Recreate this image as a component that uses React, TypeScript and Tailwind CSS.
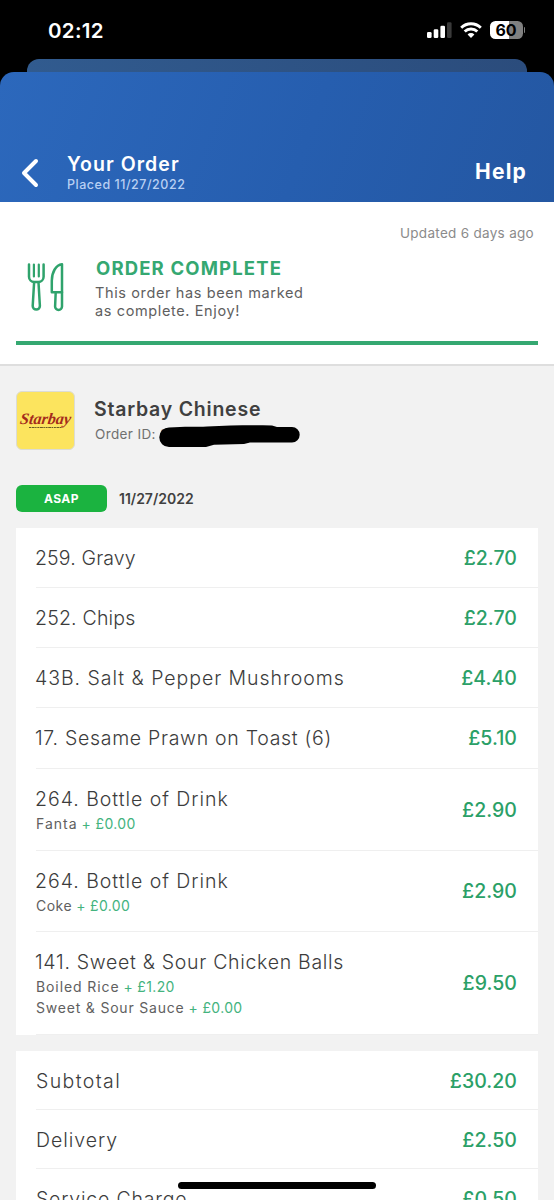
import React from 'react';

type Extra = { name: string; price: string; style: string };
type Item = { name: string; price: string; row: string; title: string; extras?: Extra[] };

const items: Item[] = [
    { name: '259. Gravy', price: '£2.70', row: 'h-[60px]', title: 'tracking-[0.15px]' },
    { name: '252. Chips', price: '£2.70', row: 'h-[60px]', title: 'tracking-[0.2px]' },
    { name: '43B. Salt & Pepper Mushrooms', price: '£4.40', row: 'h-[60px]', title: 'tracking-[0.96px]' },
    { name: '17. Sesame Prawn on Toast (6)', price: '£5.10', row: 'h-[61px]', title: 'tracking-[0.7px]' },
    {
        name: '264. Bottle of Drink',
        price: '£2.90',
        row: 'h-[82px]',
        title: 'tracking-[0.97px]',
        extras: [{ name: 'Fanta', price: '+ £0.00', style: 'tracking-[1px]' }],
    },
    {
        name: '264. Bottle of Drink',
        price: '£2.90',
        row: 'h-[81px]',
        title: 'tracking-[0.97px]',
        extras: [{ name: 'Coke', price: '+ £0.00', style: 'tracking-[0.5px]' }],
    },
    {
        name: '141. Sweet & Sour Chicken Balls',
        price: '£9.50',
        row: 'h-[103px]',
        title: 'tracking-[0.7px]',
        extras: [
            { name: 'Boiled Rice', price: '+ £1.20', style: 'tracking-[0.9px]' },
            { name: 'Sweet & Sour Sauce', price: '+ £0.00', style: 'tracking-[0.8px]' },
        ],
    },
];

const totals = [
    { name: 'Subtotal', price: '£30.20', title: 'tracking-[1.4px]' },
    { name: 'Delivery', price: '£2.50', title: 'tracking-[0.95px]' },
    { name: 'Service Charge', price: '£0.50', title: 'tracking-[0.8px]' },
];

const StatusBar = () => (
    <div className="flex h-[59px] items-start justify-between pl-12 pr-[29px] text-white">
        <div className="mt-[18px] text-[20.5px] font-semibold leading-[25px] tracking-[0.3px]">02:12</div>
        <div className="mt-[21px] flex items-start">
            <svg width="26" height="18" viewBox="0 0 26 18" fill="#fff">
                <rect x="0" y="11" width="4.6" height="6" rx="1.3" />
                <rect x="6.7" y="8.3" width="4.6" height="8.7" rx="1.3" />
                <rect x="13.4" y="4.8" width="4.6" height="12.2" rx="1.3" />
                <rect x="20" y="1.3" width="4.6" height="15.7" rx="1.3" fill="#3a3a3a" />
            </svg>
            <svg className="ml-[7px]" width="22" height="18" viewBox="0 0 22 18" fill="none" stroke="#fff" strokeWidth="2.9">
                <path d="M1.2 6.7a14 14 0 0 1 19.6 0" />
                <path d="M4.7 10.5a9 9 0 0 1 12.6 0" />
                <path d="M11 17l-3.4-3.5a4.8 4.8 0 0 1 6.8 0z" fill="#fff" stroke="none" />
            </svg>
            <div className="ml-2 flex h-[18px] w-[33px] items-center justify-center rounded-[5.5px] bg-[linear-gradient(90deg,#fff_0,#fff_19px,#808080_19px)] text-[16px] font-bold leading-none text-black">
                60
            </div>
            <div className="ml-px mt-1.5 h-1.5 w-[1.5px] rounded-r-full bg-[#808080]" />
        </div>
    </div>
);

const Header = () => (
    <div className="flex h-[130px] items-end rounded-t-[14px] bg-[linear-gradient(110deg,#2c68bc_0%,#265eaf_55%,#2457a2_100%)] text-white">
        <svg className="mb-[13px] ml-[19px]" width="20" height="34" viewBox="0 0 20 34" fill="none" stroke="#fff" strokeWidth="4" strokeLinecap="round" strokeLinejoin="round">
            <path d="M17 6 5 18 17 30" />
        </svg>
        <div className="mb-[9px] ml-[28px]">
            <div className="-mt-px text-[19.5px] font-semibold leading-[26px] tracking-[1.05px]">Your Order</div>
            <div className="text-[12.5px] font-medium leading-4 tracking-[0.52px] text-[#b9d0f3]">Placed 11/27/2022</div>
        </div>
        <div className="mb-4 ml-auto mr-[27px] text-[21px] font-bold leading-7 tracking-[1.2px]">Help</div>
    </div>
);

const CutleryIcon = () => (
    <svg width="37" height="50" viewBox="0 0 37 50" fill="none" stroke="#2fa36c" strokeWidth="2.5" strokeLinecap="round" strokeLinejoin="round">
        <path d="M2 2.5v12.3a5.2 5.2 0 0 0 5.2 5.2h4.2a5.2 5.2 0 0 0 5.2-5.2V2.5" />
        <path d="M6.9 2.5v12M11.8 2.5v12" strokeWidth="2.2" />
        <path d="M7.1 20.5 5.7 44a3.6 3.6 0 0 0 7.2 0l-1.4-23.5" />
        <path d="M35 2.2c-6 .6-10.2 8-10.2 16.5v11.6H35z" />
        <path d="M28.7 30.500l-.6 14a3.450 3.450 0 0 0 6.900 0V30.300" />
    </svg>
);

const OrderStatus = () => (
    <div className="h-[164px] border-b-2 border-[#dedede] bg-white px-4">
        <div className="flex justify-end pr-1 pt-[22px] text-[13.5px] leading-[18px] tracking-[0.3px] text-[#8b8b8b]">Updated 6 days ago</div>
        <div className="flex h-[99px]">
            <div className="ml-[11px] mt-[20px]">
                <CutleryIcon />
            </div>
            <div className="ml-[31px] mt-[14px]">
                <div className="whitespace-nowrap pl-px text-[18.5px] font-bold leading-6 tracking-[1.15px] text-[#35a871]">ORDER COMPLETE</div>
                <div className="mt-[4px] whitespace-nowrap text-[14.5px] leading-[18px] tracking-[0.62px] text-[#606060]">
                    This order has been marked
                    <br />
                    as complete. Enjoy!
                </div>
            </div>
        </div>
        <div className="h-1 bg-[#35a871]" />
    </div>
);

const Restaurant = () => (
    <div className="flex h-[84px] px-4 pt-[25px]">
        <div className="flex size-[59px] shrink-0 flex-col items-center overflow-hidden rounded-[6px] border border-[#dcdcd4] bg-[#fce45e] pt-[18px]">
            <svg width="55" height="22" viewBox="0 0 55 22" className="overflow-visible">
                <text x="3.5" y="14.5" textLength="51" lengthAdjust="spacingAndGlyphs" transform="skewX(-8)" fontFamily="Liberation Serif, serif" fontSize="16" fontWeight="700" fontStyle="italic" fill="#a52c1c">
                    Starbay
                </text>
                <path d="M11 17.5h33" stroke="#6b5a24" strokeWidth="1.2" strokeDasharray="2 .6 3 .5 1.5 .7" />
            </svg>
        </div>
        <div className="ml-[19px] mt-[5px]">
            <div className="text-[19.5px] font-semibold leading-[26px] tracking-[0.77px] text-[#404040]">Starbay Chinese</div>
            <div className="flex items-start pl-px">
                <span className="mt-[3px] whitespace-nowrap text-[13.5px] leading-[18px] tracking-[0.38px] text-[#707070]">Order ID: 2</span>
                {/* marker stroke over the order number */}
                <svg className="relative -ml-[9.5px] mt-[3px] shrink-0" width="142" height="23" viewBox="0 0 142 23">
                    <path d="M10 2.5C25 1 38 2 48 1.5 70 .5 90 0 113 .5l5 1.5h15a7.7 7.7 0 0 1 0 15.4l-42 .2-6 1.4-30 .8-8 2.2H10A9.5 9.5 0 0 1 10 2.5z" />
                </svg>
            </div>
        </div>
    </div>
);

const Home = () => (
    <div className="fixed bottom-[11px] left-[178px] h-[7px] w-[198px] rounded-full bg-black" />
);

const Price = ({ value }: { value: string }) => (
    <span className="text-[19.5px] font-medium leading-6 tracking-[0.05px] text-[#2ba067]">{value}</span>
);

const App = () => {
    return (
        <div className="h-[1200px] overflow-hidden bg-black font-['Inter','Liberation_Sans',sans-serif]">
            <StatusBar />
            <div className="mx-[27px] h-[13px] rounded-t-[12px] bg-[linear-gradient(90deg,#315b8f,#2b4c7c)]" />
            <Header />
            <div className="h-[998px] bg-[#f2f2f2]">
                <OrderStatus />
                <Restaurant />
                <div className="mt-[35px] flex h-[27px] items-center pl-4">
                    <div className="flex h-[27px] w-[91px] items-center justify-center rounded-[6px] bg-[#1bb340] text-[12px] font-bold tracking-[0.4px] text-white">ASAP</div>
                    <div className="ml-3 text-[14px] font-semibold text-[#404040]">11/27/2022</div>
                </div>

                <div className="mx-4 mt-4 bg-white pl-5 text-[#3c3c3c]">
                    {items.map((item, i) => (
                        <div key={i} className={`flex items-center justify-between border-b border-[#efefef] pr-[21px] ${item.row}`}>
                            <div className="-ml-px">
                                <div className={`whitespace-nowrap text-[19.5px] font-light leading-[30px] ${item.title}`}>{item.name}</div>
                                {item.extras && (
                                    <div className="-mt-px mb-px pl-px text-[14px] leading-[21px] text-[#606060]">
                                        {item.extras.map((extra) => (
                                            <div key={extra.name} className="flex gap-1 whitespace-nowrap">
                                                <span className={extra.style}>{extra.name}</span>
                                                <span className="tracking-[0.35px] text-[#43b37e]">{extra.price}</span>
                                            </div>
                                        ))}
                                    </div>
                                )}
                            </div>
                            <Price value={item.price} />
                        </div>
                    ))}
                </div>

                <div className="mx-4 mt-4 bg-white pl-5 text-[#3c3c3c]">
                    {totals.map((t) => (
                        <div key={t.name} className="flex h-[59px] items-center justify-between border-b border-[#efefef] pr-[21px] pt-0.5">
                            <span className={`text-[19.5px] font-light leading-[30px] ${t.title}`}>{t.name}</span>
                            <Price value={t.price} />
                        </div>
                    ))}
                </div>
            </div>
            <Home />
        </div>
    );
};

export default App;
